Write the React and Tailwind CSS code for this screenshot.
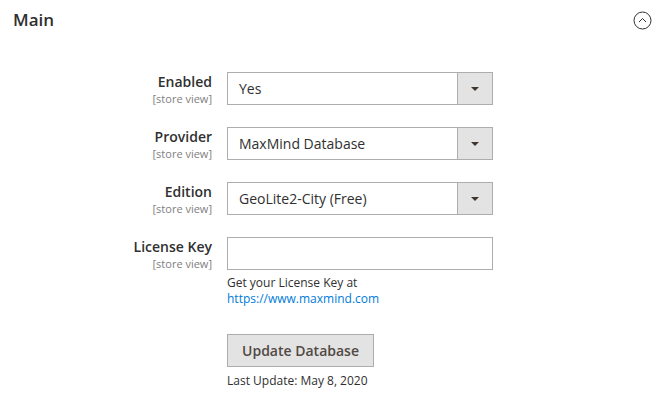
import React from 'react'

function Label({ title }) {
  return (
    <div className="w-[212px] h-[33px] shrink-0 text-right pt-[1px]">
      <div className="text-[14px] leading-[18px] font-semibold text-[#303030]">{title}</div>
      <div className="text-[11px] leading-[14px] text-[#808080] mt-[1px]">[store view]</div>
    </div>
  )
}

function Select({ value }) {
  return (
    <div className="w-[266px] h-[33px] border border-[#adadad] bg-white flex">
      <div className="flex-1 flex items-center pl-[11px] text-[14px] text-[#303030]">{value}</div>
      <div className="w-[35px] h-full border-l border-[#adadad] bg-[#e3e3e3] flex items-center justify-center">
        <svg width="8" height="4" viewBox="0 0 8 4">
          <path d="M0 0h8L4 4z" fill="#41362f" />
        </svg>
      </div>
    </div>
  )
}

export default function App() {
  return (
    <div className="w-[672px] h-[400px] bg-white overflow-hidden" style={{ fontFamily: '"Open Sans", "Noto Sans", sans-serif' }}>
      <div className="flex items-center justify-between pl-[13px] pr-[20px] pt-[8px] h-[32px]">
        <h2 className="text-[17px] font-semibold text-[#303030] leading-[22px]">Main</h2>
        <svg width="19" height="19" viewBox="0 0 19 19">
          <circle cx="9.5" cy="9.5" r="8.5" fill="none" stroke="#303030" strokeWidth="1" />
          <path d="M6 11l3.5-3.5L13 11" fill="none" stroke="#303030" strokeWidth="1" />
        </svg>
      </div>

      <div className="mt-[40px] flex flex-col gap-[22px]">
        <div className="flex gap-[15px]">
          <Label title="Enabled" />
          <Select value="Yes" />
        </div>
        <div className="flex gap-[15px]">
          <Label title="Provider" />
          <Select value="MaxMind Database" />
        </div>
        <div className="flex gap-[15px]">
          <Label title="Edition" />
          <Select value="GeoLite2-City (Free)" />
        </div>
        <div className="flex gap-[15px]">
          <Label title="License Key" />
          <div>
            <div className="w-[266px] h-[33px] border border-[#adadad] bg-white" />
            <div className="mt-[5px] text-[12px] leading-[16px] text-[#303030]">Get your License Key at</div>
            <div className="text-[12px] leading-[16px]">
              <a className="text-[#007bdb]" href="#">https://www.maxmind.com</a>
            </div>
            <button className="mt-[27px] w-[147px] h-[33px] border border-[#adadad] bg-[#e3e3e3] text-[14px] font-semibold text-[#514943]">
              Update Database
            </button>
            <div className="mt-[6px] text-[12px] leading-[15px] text-[#303030]">Last Update: May 8, 2020</div>
          </div>
        </div>
      </div>
    </div>
  )
}
